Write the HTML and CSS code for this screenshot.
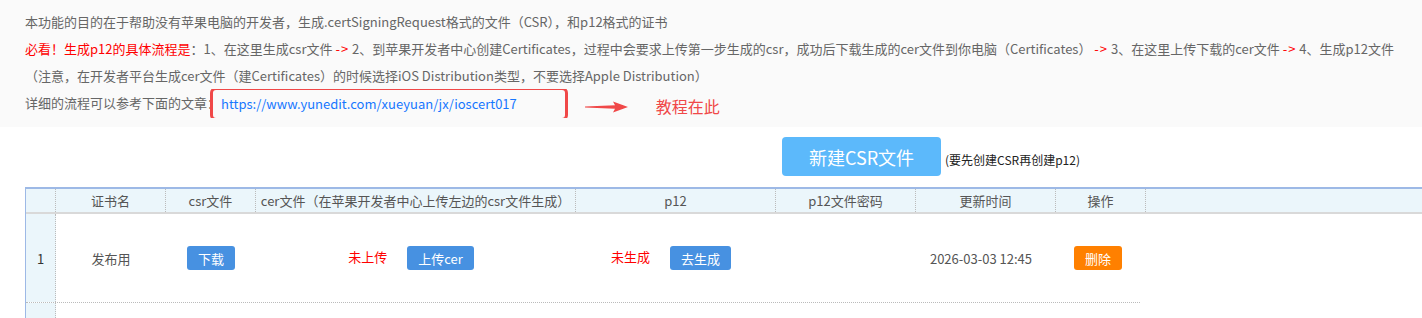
FILE: index.html
```html
<!DOCTYPE html>
<html lang="zh-CN">
<head>
<meta charset="UTF-8" />
<title>iOS证书生成</title>
<meta name="viewport" content="width=device-width, initial-scale=1.0">
<link rel="stylesheet" href="styles.css">
</head>
<body>

  <div class="notice">
    <div class="line">本功能的目的在于帮助没有苹果电脑的开发者，生成.certSigningRequest格式的文件（CSR），和p12格式的证书</div>
    <div class="line"><span class="red">必看！生成p12的具体流程是</span>：1、在这里生成csr文件 <span class="arr">-&gt;</span> 2、到苹果开发者中心创建Certificates，过程中会要求上传第一步生成的csr，成功后下载生成的cer文件到你电脑（Certificates） <span class="arr">-&gt;</span> 3、在这里上传下载的cer文件 <span class="arr">-&gt;</span> 4、生成p12文件</div>
    <div class="line">（注意，在开发者平台生成cer文件（建Certificates）的时候选择iOS Distribution类型，不要选择Apple Distribution）</div>
    <div class="line">详细的流程可以参考下面的文章：<a class="link-box" href="#">https://www.yunedit.com/xueyuan/jx/ioscert017</a><svg class="mark-arrow" width="44" height="12" viewBox="0 0 44 12"><path d="M0 5.4 L30 4.2 L28 0.5 L43 6 L28 11.5 L30 7.8 L0 6.6 Z" fill="#f04848"/></svg><span class="mark-text">教程在此</span></div>
  </div>

  <div class="actions">
    <button class="btn-new">新建CSR文件</button>
    <span class="hint">(要先创建CSR再创建p12)</span>
  </div>

  <div class="grid">
    <div class="grid-head">
      <div class="hc c-num"></div>
      <div class="hc c-name">证书名</div>
      <div class="hc c-csr">csr文件</div>
      <div class="hc c-cer">cer文件（在苹果开发者中心上传左边的csr文件生成）</div>
      <div class="hc c-p12">p12</div>
      <div class="hc c-pwd">p12文件密码</div>
      <div class="hc c-time">更新时间</div>
      <div class="hc c-op">操作</div>
      <div class="hc c-fill"></div>
    </div>
    <div class="grid-body">
      <div class="row">
        <div class="cell c-num">1</div>
        <div class="cell c-name">发布用</div>
        <div class="cell c-csr"><button class="btn">下载</button></div>
        <div class="cell c-cer"><span class="state">未上传</span><button class="btn">上传cer</button></div>
        <div class="cell c-p12"><span class="state">未生成</span><button class="btn">去生成</button></div>
        <div class="cell c-pwd"></div>
        <div class="cell c-time">2026-03-03 12:45</div>
        <div class="cell c-op"><button class="btn btn-del">删除</button></div>
      </div>
      <div class="row row-empty">
        <div class="cell c-num"></div>
      </div>
    </div>
  </div>

</body>
</html>
```

FILE: styles.css
```css
body {
  margin: 0;
  font-family: "Noto Sans CJK SC", sans-serif;
  font-size: 13px;
  color: #666;
  background-color: #ffffff;
  overflow: hidden;
}
.notice {
  background-color: #fafafa;
  padding: 8px 0 11px 25px;
  height: 108px;
}
.line {
  line-height: 27px;
  white-space: nowrap;
  overflow: hidden;
}
.red {
  color: #ff0000;
}
.arr {
  color: #ff0000;
  letter-spacing: 1px;
}
.link-box {
  display: inline-block;
  vertical-align: middle;
  height: 28px;
  line-height: 28px;
  margin: -4px 0 -4px -10px;
  padding: 0 48px 0 8px;
  border: 3px solid #f04848;
  border-radius: 6px;
  color: #1677ff;
  text-decoration: none;
  background-color: #fafafa;
}
.mark-arrow {
  vertical-align: middle;
  margin: 6px 0 0 17px;
}
.mark-text {
  font-size: 16px;
  color: #f04848;
  margin-left: 27px;
  vertical-align: middle;
  position: relative;
  top: 2px;
}
.actions {
  display: flex;
  align-items: center;
  padding: 10px 0 0 782px;
  height: 39px;
}
.btn-new {
  width: 159px;
  height: 39px;
  border: 0;
  border-radius: 4px;
  background-color: #5cb9fb;
  color: #fff;
  font-family: inherit;
  font-size: 18px;
}
.hint {
  margin-left: 4px;
  padding-top: 5px;
  font-size: 12px;
  color: #222;
}
.grid {
  margin: 11px 0 0 25px;
  border-left: 1px solid #9db9e6;
  border-top: 2px solid #9db9e6;
}
.grid-head {
  display: flex;
  height: 23px;
  background-color: #ebf6fb;
  border-bottom: 2px solid #d9d9d9;
}
.hc {
  line-height: 23px;
  text-align: center;
  color: #555;
  border-right: 1px dotted #bbb;
  box-sizing: border-box;
}
.c-num { width: 30px; flex: none; }
.c-name { width: 110px; flex: none; }
.c-csr { width: 90px; flex: none; }
.c-cer { width: 320px; flex: none; }
.c-p12 { width: 200px; flex: none; }
.c-pwd { width: 140px; flex: none; }
.c-time { width: 140px; flex: none; }
.c-op { width: 90px; flex: none; }
.hc.c-fill {
  flex: 1;
  border-right: 0;
}
.row {
  display: flex;
  width: 1114px;
  height: 88px;
  border-bottom: 1px dotted #bbb;
}
.row-empty {
  height: 15px;
  border-bottom: 0;
}
.cell {
  display: flex;
  align-items: center;
  justify-content: center;
  gap: 20px;
  color: #555;
  box-sizing: border-box;
}
.cell.c-num {
  background-color: #ebf6fb;
  border-right: 1px dotted #bbb;
  color: #333;
}
.cell.c-cer,
.cell.c-p12 {
  padding-right: 10px;
}
.cell.c-time {
  padding-right: 10px;
}
.cell.c-op {
  width: 84px;
}
.state {
  color: #ff0000;
  position: relative;
  top: -2px;
}
.btn {
  height: 24px;
  padding: 0 11px;
  border: 0;
  border-radius: 3px;
  background-color: #4791e1;
  color: #fff;
  font-family: inherit;
  font-size: 13px;
}
.btn-del {
  background-color: #ff8000;
}
```
